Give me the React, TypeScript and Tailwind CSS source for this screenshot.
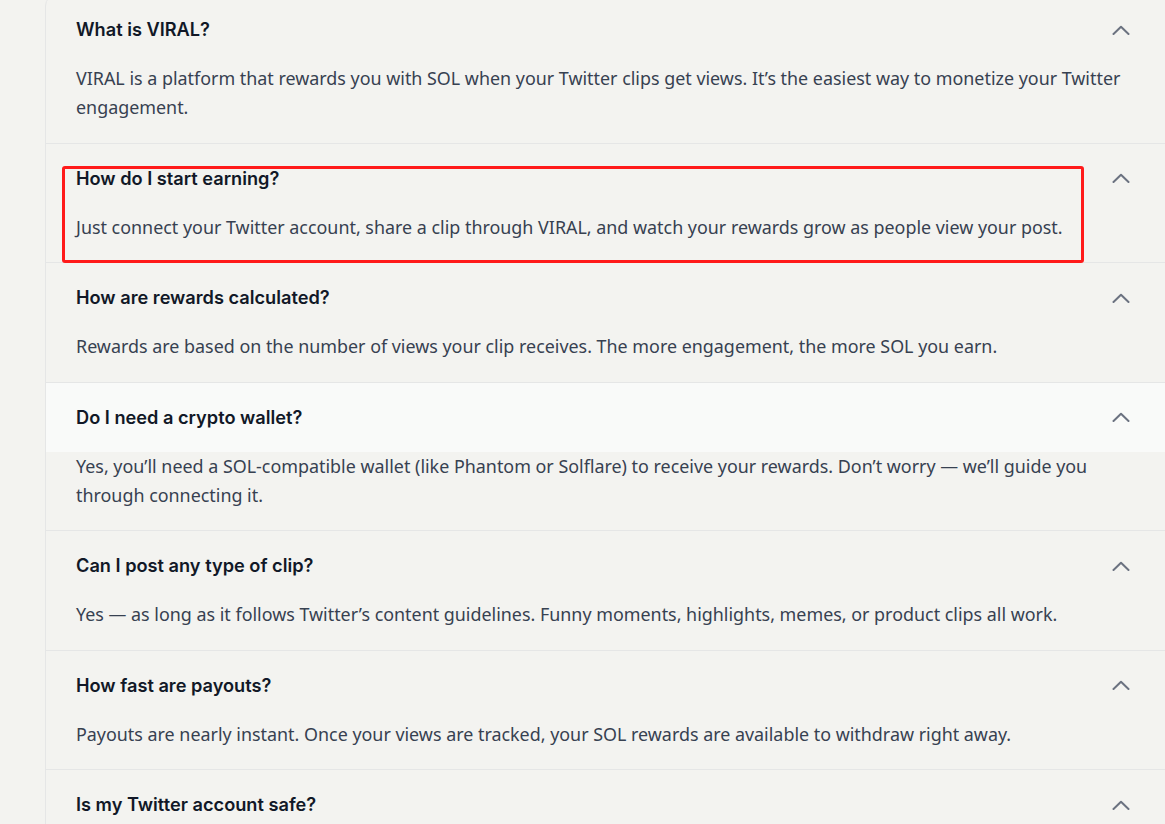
const faqs = [
  {
    q: "What is VIRAL?",
    a: "VIRAL is a platform that rewards you with SOL when your Twitter clips get views. It’s the easiest way to monetize your Twitter engagement.",
  },
  {
    q: "How do I start earning?",
    a: "Just connect your Twitter account, share a clip through VIRAL, and watch your rewards grow as people view your post.",
  },
  {
    q: "How are rewards calculated?",
    a: "Rewards are based on the number of views your clip receives. The more engagement, the more SOL you earn.",
  },
  {
    q: "Do I need a crypto wallet?",
    a: "Yes, you’ll need a SOL-compatible wallet (like Phantom or Solflare) to receive your rewards. Don’t worry — we’ll guide you through connecting it.",
  },
  {
    q: "Can I post any type of clip?",
    a: "Yes — as long as it follows Twitter’s content guidelines. Funny moments, highlights, memes, or product clips all work.",
  },
  {
    q: "How fast are payouts?",
    a: "Payouts are nearly instant. Once your views are tracked, your SOL rewards are available to withdraw right away.",
  },
  {
    q: "Is my Twitter account safe?",
    a: "Absolutely. VIRAL only uses read access to track views on the clips you share. We never post without your permission.",
  },
];

const Chevron = () => (
  <svg width="18" height="10" viewBox="0 0 18 10" fill="none" className="shrink-0">
    <polyline points="1.5,9 9,1.8 16.5,9" stroke="#6b7280" strokeWidth="2" strokeLinecap="round" strokeLinejoin="round" />
  </svg>
);

export default function App() {
  return (
    <div className="h-screen w-full overflow-hidden bg-[#f3f3f0] font-['Noto_Sans',sans-serif]">
      <div className="relative -mt-[6px] ml-[45px] w-[1124px] rounded-xl border border-[#e5e6e6] bg-[#f3f3f0]">
        {faqs.map((f, i) => (
          <div key={f.q} className={i < faqs.length - 1 ? "border-b border-[#e5e6e6]" : ""}>
            <div
              className={
                "flex items-center justify-between pl-[30px] pr-[38px] py-[22px] " +
                (i === 3 ? "bg-[#f9faf9]" : "")
              }
            >
              <h3 className="font-['Inter',sans-serif] text-[18.2px] font-semibold leading-[25px] text-[#111827]">
                {f.q}
              </h3>
              <Chevron />
            </div>
            <p className="pl-[30px] pr-[40px] pb-[20.5px] text-[17.9px] leading-[29px] text-[#374151]">{f.a}</p>
          </div>
        ))}

        <div className="pointer-events-none absolute left-[16px] top-[171px] h-[97px] w-[1022px] rounded-[3px] border-[3px] border-[#ff1a1a]" />
      </div>
    </div>
  );
}
